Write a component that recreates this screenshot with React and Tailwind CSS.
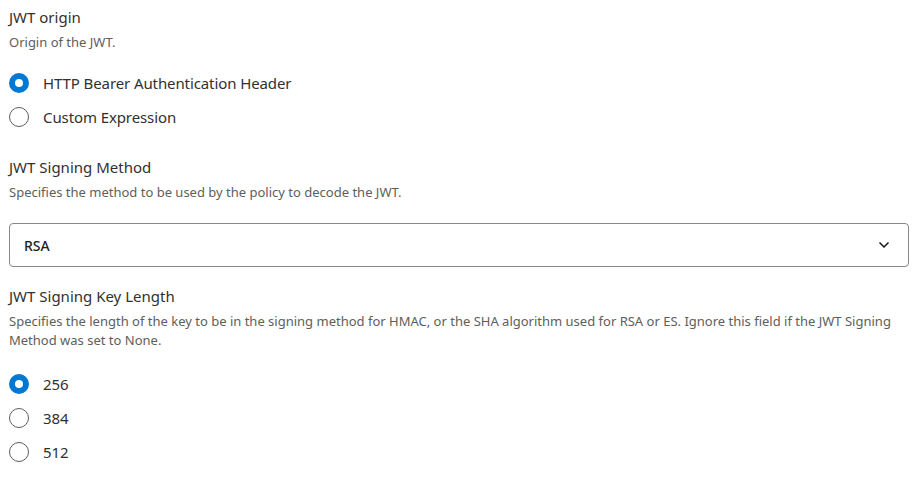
import { ChevronDown } from "lucide-react";

const font = { fontFamily: '"Segoe UI", "Noto Sans", sans-serif' };

const Radio = ({ label, checked }) => (
  <label className="flex items-center h-[34px] cursor-pointer">
    {checked ? (
      <span className="w-5 h-5 rounded-full bg-[#0078d4] flex items-center justify-center shrink-0">
        <span className="w-2 h-2 rounded-full bg-white" />
      </span>
    ) : (
      <span className="w-5 h-5 rounded-full border border-[#605e5c] bg-white shrink-0" />
    )}
    <span className="ml-[14px] text-[15px] tracking-[-0.1px] text-[#323130]">{label}</span>
  </label>
);

const FieldHeader = ({ title, desc }) => (
  <div>
    <div className="text-[15px] leading-5 text-[#323130]">{title}</div>
    <div className="mt-[6px] text-[13px] leading-[19px] text-[#605e5c]">{desc}</div>
  </div>
);

export default function App() {
  return (
    <div className="bg-white w-[920px] h-[481px] px-[9px] pt-[7px]" style={font}>
      {/* JWT origin */}
      <FieldHeader title="JWT origin" desc="Origin of the JWT." />
      <div className="mt-[14px]">
        <Radio label="HTTP Bearer Authentication Header" checked />
        <Radio label="Custom Expression" />
      </div>

      {/* Signing method */}
      <div className="mt-[23px]">
        <FieldHeader
          title="JWT Signing Method"
          desc="Specifies the method to be used by the policy to decode the JWT."
        />
      </div>
      <div className="mt-[21px] w-[900px] h-[44px] border border-[#8a8886] rounded flex items-center justify-between pl-[14px] pr-[16px]">
        <span className="text-[14px] font-medium text-[#201f1e]">RSA</span>
        <ChevronDown className="w-4 h-4 text-[#201f1e]" strokeWidth={2.5} />
      </div>

      {/* Key length */}
      <div className="mt-[19px] w-[900px]">
        <FieldHeader
          title="JWT Signing Key Length"
          desc="Specifies the length of the key to be in the signing method for HMAC, or the SHA algorithm used for RSA or ES. Ignore this field if the JWT Signing Method was set to None."
        />
      </div>
      <div className="mt-[17px]">
        <Radio label="256" checked />
        <Radio label="384" />
        <Radio label="512" />
      </div>
    </div>
  );
}
